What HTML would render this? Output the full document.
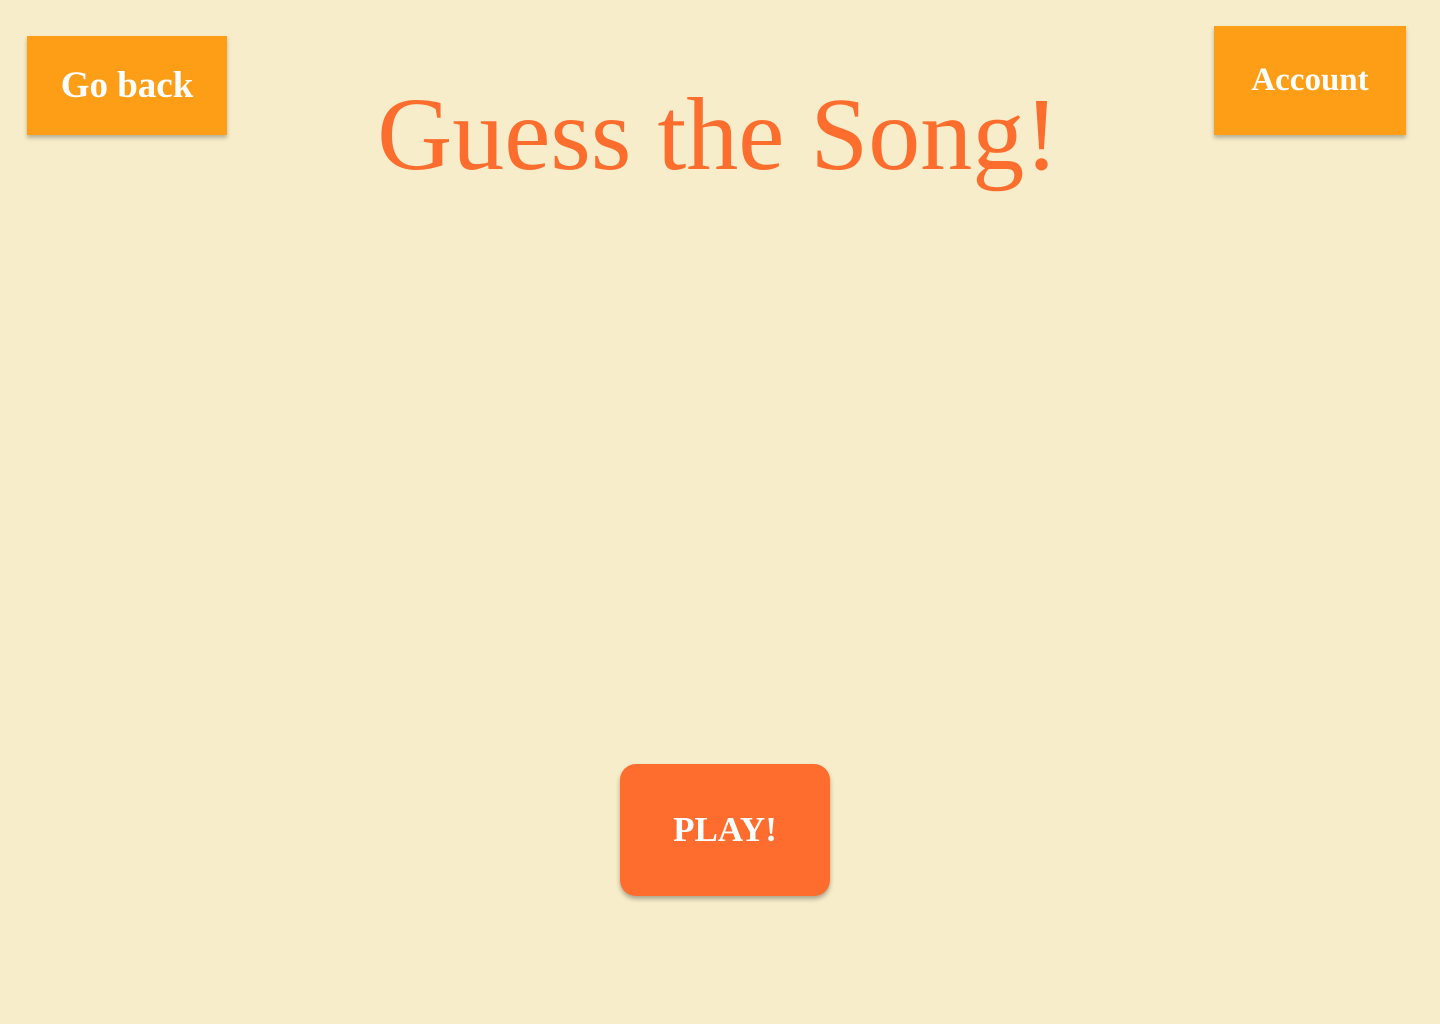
<!DOCTYPE html>
<html><head><meta charset="utf-8"><style>
html,body{margin:0;padding:0;width:1440px;height:1024px;background:#f7edca;overflow:hidden;font-family:"Liberation Serif",serif;}
.btn{position:absolute;background:#fe9e16;color:#fff;font-weight:bold;display:flex;align-items:center;justify-content:center;box-shadow:0 3px 4px rgba(0,0,0,0.25);}
#back{left:27px;top:36px;width:200px;height:99px;font-size:37px;}
#acc{left:1214px;top:26px;width:192px;height:109px;font-size:33px;}
h1{position:absolute;left:0;width:1436px;top:83px;margin:0;text-align:center;font-size:104px;font-weight:normal;color:#fd6e2e;line-height:1;}
#play{position:absolute;left:620px;top:764px;width:210px;height:132px;border-radius:16px;background:#fe6d2e;color:#fff;font-weight:bold;font-size:35px;display:flex;align-items:center;justify-content:center;box-shadow:0 3px 5px rgba(0,0,0,0.3);}
</style></head><body>
<div class="btn" id="back">Go back</div>
<div class="btn" id="acc">Account</div>
<h1>Guess the Song!</h1>
<div id="play">PLAY!</div>
</body></html>
